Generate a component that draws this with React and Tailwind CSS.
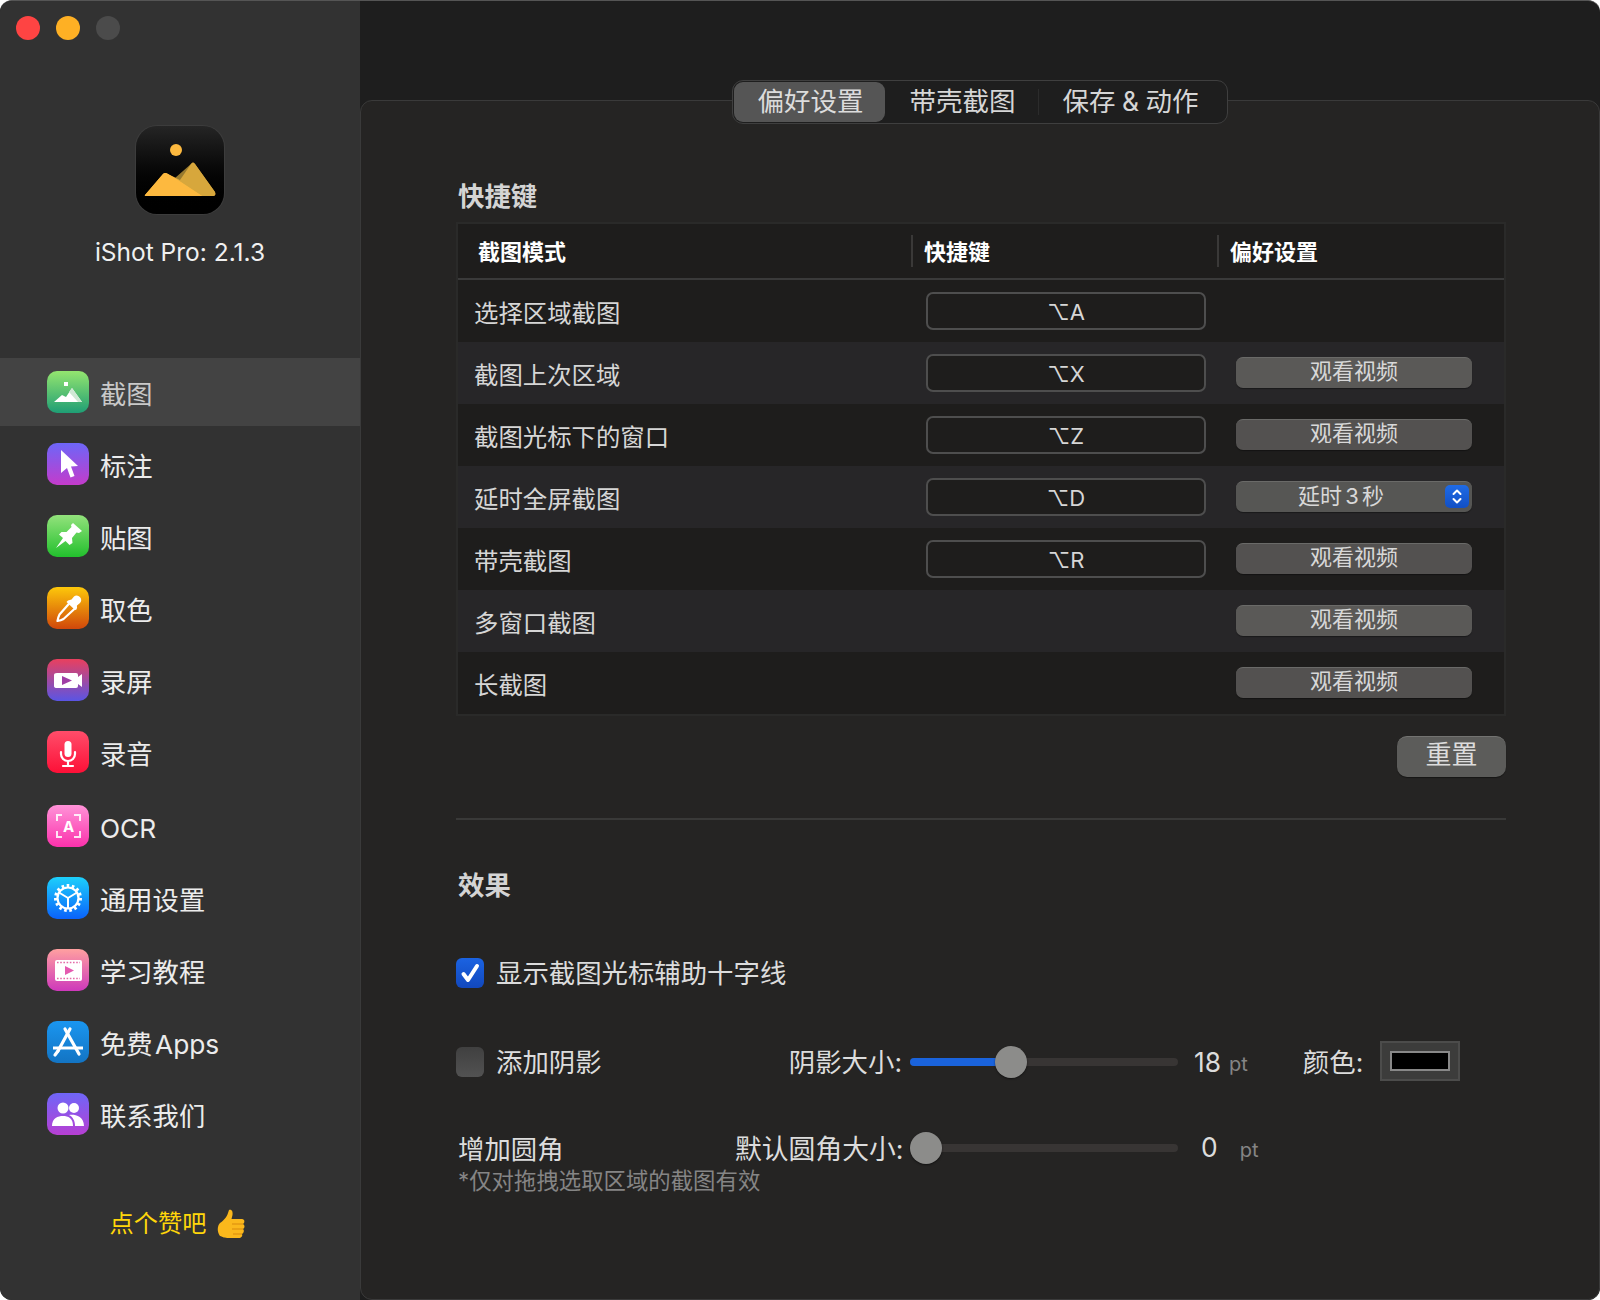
import React from "react";

const CJK = "font-['Inter','Noto_Sans_CJK_SC',sans-serif]";

function Ic({ from, to, children }) {
  return (
    <div
      className="w-[42px] h-[42px] rounded-[10px] shrink-0"
      style={{ background: `linear-gradient(180deg, ${from}, ${to})` }}
    >
      <svg viewBox="0 0 42 42" width="42" height="42">{children}</svg>
    </div>
  );
}

const nav = [
  { t: "截图", active: true, from: "#94e56f", to: "#1f9e75", g: (
    <g>
      <rect x="17" y="11" width="4" height="4" fill="#fff" />
      <path d="M7 31 L15 24 L19 26 L25 17 L35 31 Z" fill="#fff" />
      <path d="M22 21 L25 17 L35 31 L31 31 Z" fill="#cfe8d4" />
    </g>) },
  { t: "标注", from: "#6d66f8", to: "#c43bcb", g: (
    <path d="M14 7 L31 23 L24 23.5 L27.5 33 L23.5 34.5 L20 25 L14 30 Z" fill="#fff" />) },
  { t: "贴图", from: "#93e27c", to: "#22c02d", g: (
    <path d="M26 8 L35 16 L32 18 L29.5 17.5 L25 23 L25.5 28 L22.5 30 L18.5 26 L9 33 L16 23 L12 19.5 L14.5 17 L19.5 17 L24.5 12 L24 10 Z" fill="#fff" />) },
  { t: "取色", from: "#fdc80a", to: "#d0470b", g: (
    <g>
      <path d="M23.5 15 L29 20.5 L16.5 32 Q14 33.5 10.5 34 Q11 30.5 12.5 27.5 Z" fill="none" stroke="#fff" strokeWidth="2.2" strokeLinejoin="round" />
      <path d="M21 13.5 L24.5 12.5 L27 9.5 C30.5 6 37 12 33 16 L30 18.5 L29.5 22.5 L28 23 L19.5 15 Z" fill="#fff" />
    </g>) },
  { t: "录屏", from: "#e9405e", to: "#5a55e4", g: (
    <g>
      <path d="M10 14 H29 Q31 14 31 16 V18 L35 15 V28 L31 25 V27 Q31 29 29 29 H10 Q7 29 7 27 V16 Q7 14 10 14 Z" fill="#fff" />
      <path d="M15 17 L25 21.5 L15 26 Z" fill="#a03fa6" />
    </g>) },
  { t: "录音", from: "#ff4d6a", to: "#fd1037", g: (
    <g fill="none" stroke="#fff" strokeWidth="2.2" strokeLinecap="round">
      <rect x="17.5" y="10" width="7" height="16" rx="3.5" fill="#fff" stroke="none" />
      <path d="M14 21 V23 A7 7 0 0 0 28 23 V21" />
      <path d="M21 30 V34 M16 35 H26" />
    </g>) },
  { t: "OCR", extra: "mt-[2px]", from: "#ff93d8", to: "#fb31ab", g: (
    <g>
      <path d="M10 16 V10 H15 M27 10 H33 V16 M33 26 V32 H27 M15 32 H10 V26" fill="none" stroke="#fff" strokeOpacity=".85" strokeWidth="2" />
      <text x="21.5" y="27" textAnchor="middle" fontFamily="Inter, sans-serif" fontWeight="700" fontSize="15" fill="#fff">A</text>
    </g>) },
  { t: "通用设置", from: "#1dd0fb", to: "#0a62fb", g: (
    <g fill="none" stroke="#fff">
      <circle cx="21" cy="21" r="10.5" strokeWidth="2.2" />
      <circle cx="21" cy="21" r="12.5" strokeWidth="3" strokeDasharray="2.6 2.6" />
      <path d="M21 21 L12 15.5 M21 21 L30 15.5 M21 21 L21 31" strokeWidth="2" />
    </g>) },
  { t: "学习教程", from: "#ffa0a0", to: "#ce38bb", g: (
    <g>
      <rect x="8" y="11" width="27" height="21" rx="2" fill="#fff" />
      <path d="M10 13.5 H33 M10 29.5 H33" stroke="#e46ba8" strokeWidth="1.6" strokeDasharray="1.6 1.6" />
      <path d="M18 17 L27 21.5 L18 26 Z" fill="#e45ab0" />
    </g>) },
  { t: "免费 Apps", from: "#1a96f0", to: "#1374c3", g: (
    <g stroke="#fff" fill="none" strokeLinecap="round">
      <path d="M23 8 L11 30" strokeWidth="3.2" />
      <path d="M18 8 L32 33" strokeWidth="3.2" />
      <path d="M6 27 H36" strokeWidth="3" strokeLinecap="butt" />
      <path d="M11 30 L8 34" strokeWidth="3.2" />
    </g>) },
  { t: "联系我们", from: "#6f66f8", to: "#b73fd3", g: (
    <g fill="#fff">
      <circle cx="16" cy="15" r="5.5" />
      <path d="M5 33 C5 25 11 23 16 23 C21 23 26 25 26 33 Z" />
      <circle cx="27" cy="15" r="5" />
      <path d="M22 22 C26 21 37 22 37 33 H28 C28 28 26 24 22 22 Z" />
    </g>) },
];

const rows = [
  { t: "选择区域截图", k: "⌥A" },
  { t: "截图上次区域", k: "⌥X", b: "观看视频" },
  { t: "截图光标下的窗口", k: "⌥Z", b: "观看视频" },
  { t: "延时全屏截图", k: "⌥D", s: true },
  { t: "带壳截图", k: "⌥R", b: "观看视频" },
  { t: "多窗口截图", b: "观看视频" },
  { t: "长截图", b: "观看视频" },
];

function Sidebar() {
  return (
    <aside className="w-[360px] shrink-0 h-full bg-[#323232] flex flex-col">
      <div className="flex gap-4 pl-4 pt-[15px]">
        <span className="w-6 h-6 rounded-full bg-[#fe4443]" />
        <span className="w-6 h-6 rounded-full bg-[#feb024]" />
        <span className="w-6 h-6 rounded-full bg-[#4b4b4b]" />
      </div>
      <div className="mt-[86px] flex justify-center">
        <div className="w-[88px] h-[88px] rounded-[21px] bg-gradient-to-b from-[#252525] to-[#000] shadow-[0_0_0_1px_#3c3c3c]">
          <svg viewBox="0 0 88 88" width="88" height="88">
            <circle cx="40" cy="24" r="6" fill="#fdb93f" />
            <path d="M9 69 L27 48 Q29 46 32 48 L44 54 L55 38 Q57 35 59 38 L79 66 Q80.5 70 77 70 H11 Q8 70 9 69 Z" fill="#fdb93f" />
            <path d="M39 52 L55 38 Q57 35 59 38 L79 66 Q80 69 77 70 H66 Z" fill="#c9a23c" opacity=".75" />
            <path d="M9 69 L27 48 Q29 46 32 48 L66 70 H11 Q8 70 9 69 Z" fill="#fdb93f" />
          </svg>
        </div>
      </div>
      <div className="mt-[22px] text-center text-[24.5px] leading-[32px] text-[#f0f0f0] font-['Inter',sans-serif]">iShot Pro: 2.1.3</div>
      <nav className="mt-[90px] flex flex-col">
        {nav.map((n) => (
          <div key={n.t} className={`flex items-center pl-[47px] gap-[11px] ${n.active ? "bg-[#434343] h-[68px] mb-[2px]" : "h-[72px]"} ${n.extra || ""}`}>
            <Ic from={n.from} to={n.to}>{n.g}</Ic>
            <span className={`text-[26.3px] pt-[6px] [word-spacing:-5px] ${CJK} ${n.active ? "text-[#c9c9c9]" : "text-[#ececec]"}`}>{n.t}</span>
          </div>
        ))}
      </nav>
      <div className="mt-[56px] pr-[3px] flex items-center justify-center gap-[9px]">
        <span className={`text-[24.2px] text-[#ffd60a] ${CJK}`}>点个赞吧</span>
        <svg viewBox="0 0 32 32" width="32" height="32">
          <path d="M14 2 C17 1 18 4 17.5 7 L16.5 11 H27 C30 11 30 15 28 16 C30 17 30 20 28 21 C29.5 22 29 25 27 26 C28 28 26 30 24 30 H14 C9 30 8 29 5 28 C2 24 2 18 5 15 C8 13 12 9 13 5 Z" fill="#fbb81c" />
          <path d="M17 16 H28 M17 21 H28 M18 26 H27" stroke="#d98a0c" strokeWidth="1.2" fill="none" />
        </svg>
      </div>
    </aside>
  );
}

function Tabs() {
  return (
    <div className="flex justify-center -mt-[21px]">
      <div className={`relative z-10 w-[496px] h-[44px] rounded-[11px] border border-[#3f3f3f] bg-[#1e1e1e] p-[1px] flex items-center text-[26.5px] text-[#d6d6d6] ${CJK}`}>
        <div className="w-[151px] h-[40px] rounded-[9px] bg-[#555555] flex items-center justify-center pl-[2px] text-[#dcdcdc]">偏好设置</div>
        <div className="w-[153px] flex justify-center pl-[2px]">带壳截图</div>
        <div className="w-px h-[26px] bg-[#2c2c2c]" />
        <div className="flex-1 flex justify-center whitespace-pre pr-[4px] [word-spacing:-1px]">保存 &amp; 动作</div>
      </div>
    </div>
  );
}

function Btn({ children, tone }) {
  return (
    <div className={`ml-[30px] w-[236px] h-[31px] rounded-[7px] shadow-[0_1px_1px_rgba(0,0,0,.35)] border-t border-[#6a6a68] text-[22px] leading-[26px] text-[#d8d8d8] flex justify-center -translate-y-[1px] ${tone}`}>
      {children}
    </div>
  );
}

function Table() {
  return (
    <div className={`border-2 border-[#2a2a29] ${CJK}`}>
      <div className="h-[56px] bg-[#1e1d1c] border-b-2 border-[#3a3a3a] flex items-center text-[22px] font-bold text-white">
        <div className="w-[455px] pl-[20px] h-[32px] border-r-2 border-[#3a3938] leading-[34px]">截图模式</div>
        <div className="w-[306px] pl-[11px] h-[32px] border-r-2 border-[#3a3938] leading-[34px]">快捷键</div>
        <div className="pl-[11px] h-[32px] leading-[34px]">偏好设置</div>
      </div>
      {rows.map((r, i) => (
        <div key={r.t} className={`h-[62px] flex items-center ${i % 2 ? "bg-[#272628]" : "bg-[#1e1d1c]"}`}>
          <div className="w-[468px] pl-[16px] text-[24.4px] text-[#d6d6d6] pt-[5px]">{r.t}</div>
          <div className="w-[280px] h-[38px]">
            {r.k && (
              <div className="h-full rounded-[7px] border-2 border-[#4e4e4e] bg-[#1e1d1c] flex items-center justify-center pt-[2px] text-[22px] text-[#d6d6d6] font-['Inter','Liberation_Sans','DejaVu_Sans',sans-serif]">
                {r.k}
              </div>
            )}
          </div>
          {r.b && <Btn tone={i % 2 ? "bg-[#5a5957]" : "bg-[#535150]"}>{r.b}</Btn>}
          {r.s && (
            <div className="relative ml-[30px] w-[236px] h-[31px] rounded-[7px] bg-[#565654] border-t border-[#6a6a68] shadow-[0_1px_1px_rgba(0,0,0,.35)] text-[22px] leading-[28px] text-[#d8d8d8] flex justify-center pr-[26px] [word-spacing:-3px] -translate-y-[1px]">
              延时 3 秒
              <div className="absolute right-[3px] top-[3px] w-[24px] h-[23px] rounded-[5px] bg-gradient-to-b from-[#1f6be6] to-[#124fc4]">
                <svg viewBox="0 0 24 23" width="24" height="23" fill="none" stroke="#fff" strokeWidth="2" strokeLinecap="round" strokeLinejoin="round">
                  <path d="M8.5 9 L12 5.5 L15.5 9 M8.5 14 L12 17.5 L15.5 14" />
                </svg>
              </div>
            </div>
          )}
        </div>
      ))}
    </div>
  );
}

function Slider({ fill, pct }) {
  return (
    <div className="relative w-[268px] h-2 rounded-full bg-[#383534]">
      {fill && <div className="h-full rounded-full bg-[#1a63dc]" style={{ width: `${pct}px` }} />}
      <div className="absolute top-[-12px] w-8 h-8 rounded-full bg-[#8c8c8a] shadow-[0_1px_2px_rgba(0,0,0,.5)]" style={{ left: `${fill ? pct - 16 : 0}px` }} />
    </div>
  );
}

function Panel() {
  return (
    <div className="flex-1 rounded-[12px] border border-[#3a3a3a] bg-[#252423]">
      <Tabs />
      <div className={`ml-[95px] w-[1050px] ${CJK}`}>
        <h2 className="mt-[54px] pl-[2px] text-[26.4px] leading-[36px] font-bold text-[#d4d4d4]">快捷键</h2>
        <div className="mt-[8px]"><Table /></div>
        <div className="flex justify-end mt-[20px]">
          <div className="w-[109px] h-[41px] rounded-[10px] bg-[#5c5c5a] border-t border-[#737371] shadow-[0_1px_1px_rgba(0,0,0,.4)] text-[26px] leading-[36px] text-[#dcdcdc] text-center">重置</div>
        </div>
        <div className="mt-[41px] h-[2px] bg-[#393938]" />
        <h2 className="mt-[47px] pl-[2px] text-[26.4px] leading-[36px] font-bold text-[#d4d4d4]">效果</h2>

        <div className="mt-[52px] flex items-center gap-[12px] text-[26.4px] leading-[36px] text-[#dcdcdc]">
          <div className="w-[28px] h-[30px] rounded-[6px] bg-gradient-to-b from-[#1b63e2] to-[#1248bd] flex items-center justify-center">
            <svg viewBox="0 0 28 30" width="28" height="30" fill="none" stroke="#fff" strokeWidth="4" strokeLinecap="round" strokeLinejoin="round">
              <path d="M7.5 16 L12 22 L21 8" />
            </svg>
          </div>
          <span>显示截图光标辅助十字线</span>
        </div>

        <div className="mt-[51px] flex items-center text-[26.4px] leading-[36px] text-[#dcdcdc]">
          <div className="w-[28px] h-[30px] rounded-[6px] bg-gradient-to-b from-[#404040] to-[#525252]" />
          <span className="ml-[12px] w-[292px]">添加阴影</span>
          <span className="w-[122px] text-right pr-[8px]">阴影大小:</span>
          <Slider fill pct={101} />
          <span className="ml-[16px] font-['Inter',sans-serif]">18</span>
          <span className="ml-[8px] mt-[4px] text-[20px] text-[#858585] font-['Inter',sans-serif]">pt</span>
          <span className="ml-[55px] w-[77px]">颜色:</span>
          <div className="w-[80px] h-[40px] -translate-y-[1px] border-2 border-[#4c4c4b] bg-[#3c3c3b] flex items-center justify-center">
            <div className="w-[60px] h-[20px] bg-black border-2 border-[#888]" />
          </div>
        </div>

        <div className="mt-[49px] flex text-[26.4px] leading-[36px] text-[#dcdcdc]">
          <div className="w-[279px] pl-[2px]">
            <div>增加圆角</div>
            <div className="text-[22.4px] leading-[28px] text-[#858585] whitespace-nowrap">*仅对拖拽选取区域的截图有效</div>
          </div>
          <span className="w-[175px] text-right pr-[8px] text-[26.8px] whitespace-nowrap">默认圆角大小:</span>
          <div className="pt-[13px] flex items-start">
            <Slider />
          </div>
          <span className="ml-[23px] font-['Inter',sans-serif] -mt-[2px]">0</span>
          <span className="ml-[22px] mt-[1px] text-[20px] text-[#858585] font-['Inter',sans-serif]">pt</span>
        </div>
      </div>
    </div>
  );
}

export default function App() {
  return (
    <div className="w-[1600px] h-[1300px] bg-white overflow-hidden">
      <div className="w-full h-full rounded-[12px] overflow-hidden flex bg-[#1e1e1e] border-t border-[#555]">
        <Sidebar />
        <main className="flex-1 flex flex-col pt-[99px]">
          <Panel />
        </main>
      </div>
    </div>
  );
}
